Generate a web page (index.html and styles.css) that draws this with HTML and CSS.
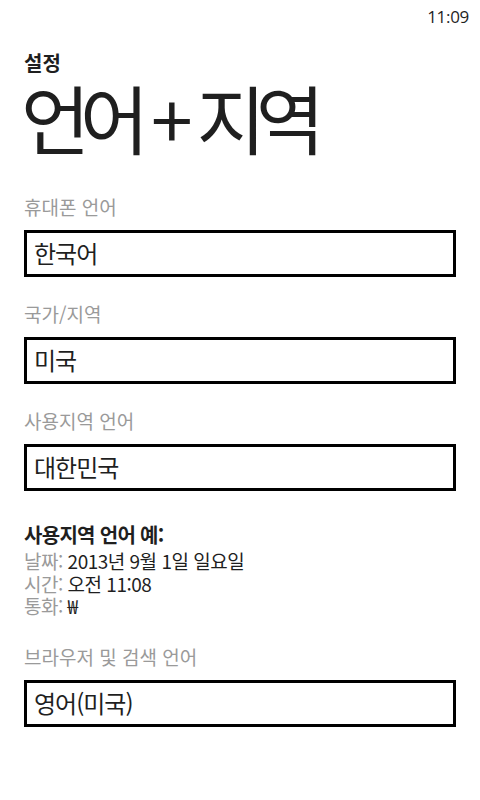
FILE: index.html
```html
<!DOCTYPE html>
<html lang="ko">
<head>
<meta charset="utf-8">
<link rel="stylesheet" href="styles.css">
</head>
<body>
<div class="status"><span class="clock">11:09</span></div>
<header class="header">
  <div class="app">설정</div>
  <h1 class="title">언어<span class="plus">+</span>지역</h1>
</header>
<main class="content">
  <section class="field first">
    <div class="label">휴대폰 언어</div>
    <div class="box">한국어</div>
  </section>
  <section class="field">
    <div class="label">국가/지역</div>
    <div class="box">미국</div>
  </section>
  <section class="field">
    <div class="label">사용지역 언어</div>
    <div class="box">대한민국</div>
  </section>
  <section class="example">
    <div class="ex-title">사용지역 언어 예:</div>
    <div class="ex-lines">
      <div class="ex-line"><span class="ex-key">날짜:</span> 2013년 9월 1일 일요일</div>
      <div class="ex-line"><span class="ex-key">시간:</span> 오전 11:08</div>
      <div class="ex-line"><span class="ex-key">통화:</span> ₩</div>
    </div>
  </section>
  <section class="field last">
    <div class="label">브라우저 및 검색 언어</div>
    <div class="box">영어(미국)</div>
  </section>
</main>
</body>
</html>
```

FILE: styles.css
```css
html, body {
  margin: 0;
  padding: 0;
  background: #ffffff;
}
body {
  width: 480px;
  height: 800px;
  overflow: hidden;
  font-family: "Noto Sans CJK KR", "Noto Sans", sans-serif;
  color: #1f1f1f;
}
.status {
  height: 33px;
  display: flex;
  justify-content: flex-end;
  align-items: center;
  padding-right: 11px;
}
.clock {
  font-family: "Open Sans", "Noto Sans", sans-serif;
  font-size: 17px;
  line-height: 20px;
  color: #1f1f1f;
  letter-spacing: -0.3px;
}
.header {
  padding-left: 24px;
  margin-top: 17px;
}
.app {
  font-size: 20px;
  font-weight: 700;
  line-height: 26px;
  letter-spacing: 0;
}
.title {
  margin: 0;
  font-weight: 400;
  font-size: 75px;
  line-height: 82px;
  letter-spacing: -10px;
  margin-left: -3px;
}
.plus {
  margin: 0 14px 0 12px;
}
.content {
  padding: 0 24px;
}
.field {
  margin-top: 24px;
}
.field.first {
  margin-top: 36px;
}
.field.last {
  margin-top: 26px;
}
.label {
  font-size: 19px;
  line-height: 26px;
  color: #9a9a9a;
  letter-spacing: 0;
}
.box {
  margin-top: 10px;
  height: 47px;
  box-sizing: border-box;
  border: 3px solid #000;
  padding-left: 7px;
  font-size: 24px;
  line-height: 40px;
  letter-spacing: -1px;
  color: #1f1f1f;
}
.example {
  margin-top: 31px;
}
.ex-title {
  font-size: 20px;
  font-weight: 700;
  line-height: 26px;
  letter-spacing: -0.7px;
}
.ex-lines {
  margin-top: 2px;
}
.ex-line {
  font-size: 19px;
  line-height: 22.5px;
  letter-spacing: -0.5px;
}
.ex-key {
  color: #9a9a9a;
}
```
